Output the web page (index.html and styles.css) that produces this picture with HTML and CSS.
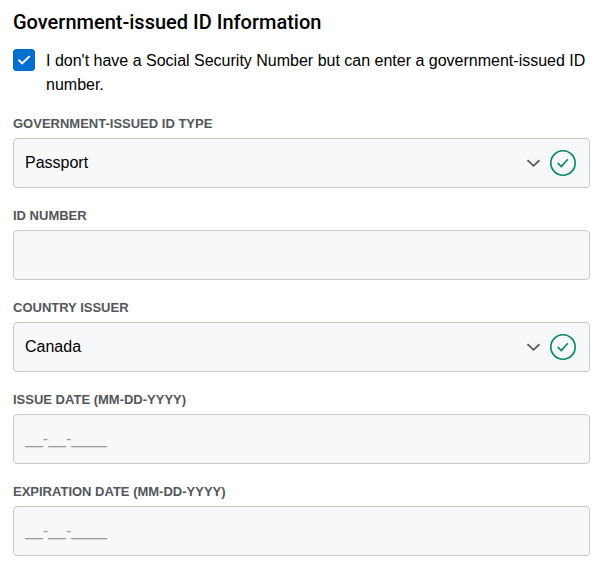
FILE: index.html
```
<!DOCTYPE html>
<html lang="en">
<head>
    <meta charset="UTF-8">
    <meta name="viewport" content="width=device-width, initial-scale=1.0">
    <title>Government-issued ID Information</title>
    <link rel="stylesheet" href="styles.css">
</head>
<body>
    <form class="id-form">
        <h1>Government-issued ID Information</h1>

        <div class="check-row">
            <span class="check-box">
                <input type="checkbox" id="noSsn" checked>
                <svg class="check-mark" viewBox="0 0 22 22" aria-hidden="true"><path d="M5.5 10.800l3.600 3.600 7.600-7.300"/></svg>
            </span>
            <label for="noSsn">I don't have a Social Security Number but can enter a government-issued ID number.</label>
        </div>

        <div class="field">
            <label for="idType">Government-issued ID Type</label>
            <div class="control">
                <select id="idType">
                    <option selected>Passport</option>
                </select>
                <div class="icons">
                    <svg class="chevron" viewBox="0 0 14 8" stroke-width="1.7" aria-hidden="true"><path d="M1.5 1.2L7.5 6.8l6-5.600"/></svg>
                    <svg class="valid" viewBox="0 0 26 26" stroke-width="1.6" aria-hidden="true"><circle cx="13" cy="13" r="12.200"/><path d="M7.800 13l3.500 3.600 6.500-7.300"/></svg>
                </div>
            </div>
        </div>

        <div class="field">
            <label for="idNumber">ID Number</label>
            <input type="text" id="idNumber">
        </div>

        <div class="field">
            <label for="country">Country Issuer</label>
            <div class="control">
                <select id="country">
                    <option selected>Canada</option>
                </select>
                <div class="icons">
                    <svg class="chevron" viewBox="0 0 14 8" stroke-width="1.7" aria-hidden="true"><path d="M1.5 1.2L7.5 6.8l6-5.600"/></svg>
                    <svg class="valid" viewBox="0 0 26 26" stroke-width="1.6" aria-hidden="true"><circle cx="13" cy="13" r="12.200"/><path d="M7.800 13l3.500 3.600 6.500-7.300"/></svg>
                </div>
            </div>
        </div>

        <div class="field">
            <label for="issueDate">Issue Date (MM-DD-YYYY)</label>
            <input type="text" id="issueDate" placeholder="__-__-____">
        </div>

        <div class="field">
            <label for="expDate">Expiration Date (MM-DD-YYYY)</label>
            <input type="text" id="expDate" placeholder="__-__-____">
        </div>
    </form>
</body>
</html>
```
FILE: styles.css
```
* {
    box-sizing: border-box;
}

body {
    margin: 0;
    background-color: #fff;
    color: #000;
    font-family: "Liberation Sans", Arial, sans-serif;
    font-size: 16px;
    line-height: 24px;
}

.id-form {
    padding: 10px 21px 16px 13px;
}

h1 {
    margin: 0 0 15px;
    font-family: Roboto, sans-serif;
    font-size: 20px;
    font-weight: 500;
    line-height: 24px;
}

.check-row {
    display: flex;
    align-items: flex-start;
    gap: 11px;
    margin-bottom: 18px;
}

.check-box {
    position: relative;
    flex: none;
    width: 22px;
    height: 22px;
}

.check-box input {
    appearance: none;
    display: block;
    width: 22px;
    height: 22px;
    margin: 0;
    border: 1px solid #c8c9c7;
    border-radius: 3px;
    background-color: #f7f8f9;
}

.check-box input:checked {
    border-color: #006fcf;
    background-color: #006fcf;
}

.check-mark {
    position: absolute;
    inset: 0;
    fill: none;
    stroke: #fff;
    stroke-width: 2;
    pointer-events: none;
}

.field {
    margin-bottom: 19px;
}

.field:last-child {
    margin-bottom: 0;
}

.field label {
    display: block;
    margin-bottom: 5px;
    color: #53565a;
    font-size: 13px;
    font-weight: bold;
    line-height: 18px;
    text-transform: uppercase;
}

.field input,
.field select {
    appearance: none;
    display: block;
    width: 100%;
    height: 50px;
    padding: 0 11px;
    border: 1px solid #c8c9c7;
    border-radius: 4px;
    background-color: #f7f8f9;
    color: #000;
    font-family: inherit;
    font-size: 16px;
}

.field select {
    padding-bottom: 2px;
}

.field input::placeholder {
    color: #97999b;
}

.control {
    position: relative;
}

.icons {
    position: absolute;
    top: 0;
    right: 14px;
    bottom: 0;
    display: flex;
    align-items: center;
    gap: 10px;
    fill: none;
    pointer-events: none;
}

.chevron {
    width: 14px;
    height: 8px;
    stroke: #53565a;
}

.valid {
    width: 26px;
    height: 26px;
    stroke: #008767;
}
```
